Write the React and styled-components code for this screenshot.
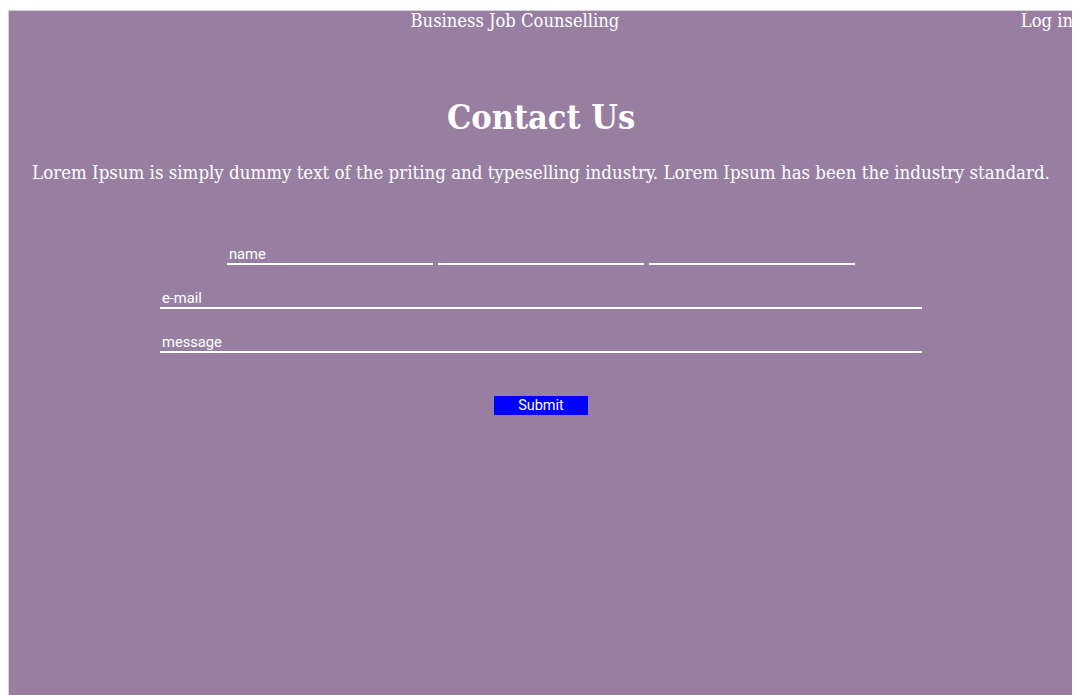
import React from "react";
import styled, { createGlobalStyle } from "styled-components";

const Global = createGlobalStyle`
  body {
    margin: 8px;
    font-family: "DejaVu Serif Condensed", "DejaVu Serif", serif;
  }
`;

function App() {
  return (
    <>
      <Global />
      <Page>
        <Header>
          <Brand>Business Job Counselling</Brand>
          <Login>Log in</Login>
        </Header>
        <Title>Contact Us</Title>
        <Intro>
          Lorem Ipsum is simply dummy text of the priting and typeselling
          industry. Lorem Ipsum has been the industry standard.
        </Intro>
        <Form onSubmit={(e) => e.preventDefault()}>
          <NameRow>
            <Field $w={202} placeholder="name" />
            <Field $w={202} />
            <Field $w={202} />
          </NameRow>
          <Field $w={758} placeholder="e-mail" />
          <Field $w={758} placeholder="message" />
          <Submit type="submit">Submit</Submit>
        </Form>
      </Page>
    </>
  );
}

const Page = styled.div`
  width: 100%;
  min-height: 100vh;
  margin-top: 2px;
  background: #987fa2;
  border: 1px solid #d8cfdd;
  border-bottom: none;
  color: white;
`;

const Header = styled.div`
  display: flex;
  align-items: flex-start;
  font-size: 18.2px;
  line-height: 20px;
`;

const Brand = styled.div`
  flex: 1;
  text-align: center;
`;

const Login = styled.div``;

const Title = styled.h1`
  margin: 62px 0 0;
  text-align: center;
  font-size: 34px;
  line-height: 48px;
`;

const Intro = styled.p`
  margin: 20px 0 0;
  text-align: center;
  font-size: 18.5px;
  line-height: 24px;
`;

const Form = styled.form`
  display: flex;
  flex-direction: column;
  align-items: center;
  gap: 24px;
  margin-top: 60px;
`;

const NameRow = styled.div`
  display: flex;
  gap: 5px;
`;

const Field = styled.input`
  width: ${(p) => p.$w}px;
  height: 18px;
  padding: 0 2px;
  background: transparent;
  border: none;
  border-bottom: 2px solid white;
  outline: none;
  color: white;
  font-family: Roboto, sans-serif;
  font-size: 14.7px;
  line-height: 16px;
  &::placeholder {
    color: white;
  }
`;

const Submit = styled.button`
  margin-top: 19px;
  width: 94px;
  height: 19px;
  padding: 0;
  background: #0000ff;
  border: none;
  color: white;
  font-family: Roboto, sans-serif;
  font-size: 14.5px;
`;

export default App;
